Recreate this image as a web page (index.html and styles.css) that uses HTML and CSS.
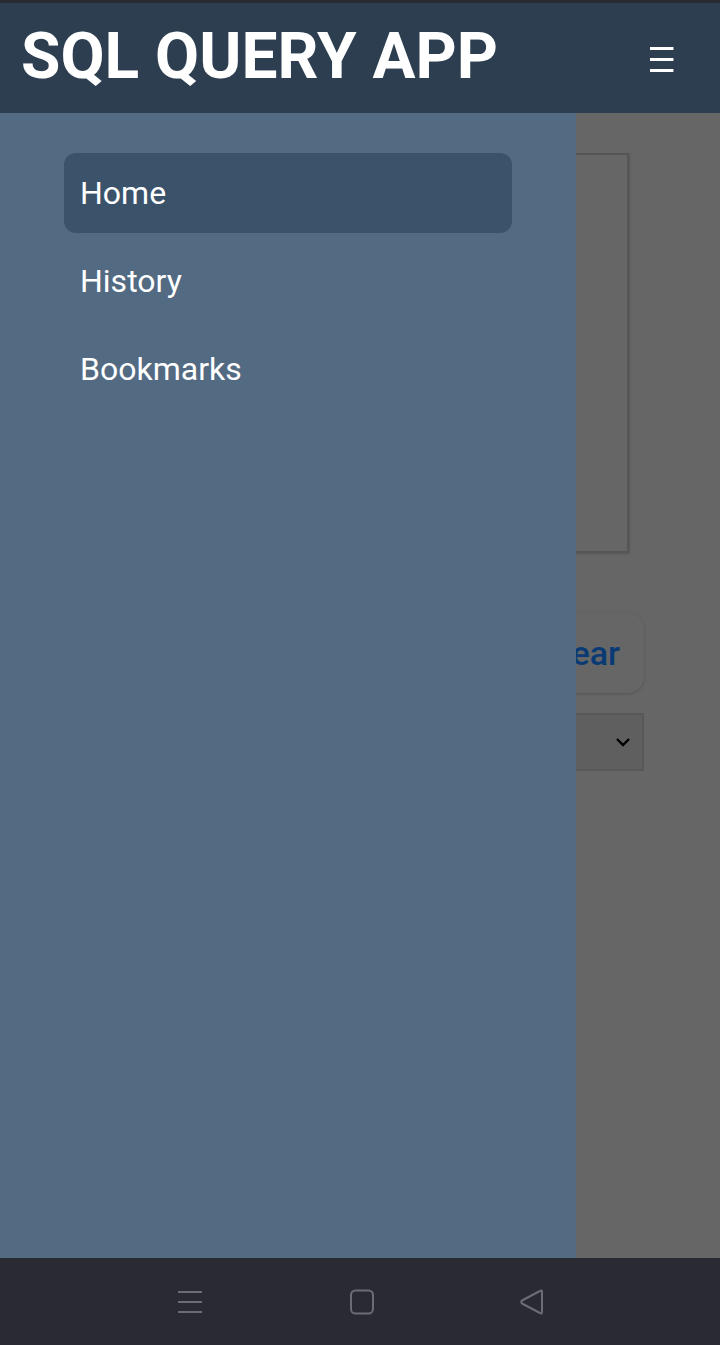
FILE: index.html
```html
<!DOCTYPE html>
<html lang="en">
<head>
<meta charset="utf-8">
<title>SQL Query App</title>
<link rel="stylesheet" href="styles.css">
</head>
<body>
<div class="statusbar"></div>
<header class="topbar">
  <h1 class="title">SQL QUERY APP</h1>
  <button class="menu-btn" aria-label="Menu">
    <span></span><span></span><span></span>
  </button>
</header>
<div class="stage">
  <main class="content">
    <textarea class="query" aria-label="Query"></textarea>
    <div class="actions">
      <button class="btn">Run</button>
      <button class="btn">Clear</button>
    </div>
    <div class="select">
      <span class="select-value"></span>
      <svg class="chevron" width="16" height="10" viewBox="0 0 16 10"><path d="M2 2 L8 8 L14 2" fill="none" stroke="#000" stroke-width="2.4"/></svg>
    </div>
  </main>
  <nav class="drawer">
    <a class="nav-item active">Home</a>
    <a class="nav-item">History</a>
    <a class="nav-item">Bookmarks</a>
  </nav>
</div>
<footer class="navbar">
  <svg class="nav-icon" width="26" height="26" viewBox="0 0 26 26"><path d="M1 3 H25 M1 13 H25 M1 23 H25" stroke="#6c6c74" stroke-width="2" fill="none"/></svg>
  <svg class="nav-icon" width="26" height="26" viewBox="0 0 26 26"><rect x="2" y="1.5" width="22" height="23" rx="4.5" stroke="#6c6c74" stroke-width="2" fill="none"/></svg>
  <svg class="nav-icon nav-back" width="26" height="28" viewBox="0 0 26 28"><path d="M22 3 Q24 1.5 24 4 V24 Q24 26.5 22 25 L4 15.5 Q2.5 14 4 12.5 Z" stroke="#6c6c74" stroke-width="2" fill="none" stroke-linejoin="round"/></svg>
</footer>
</body>
</html>
```
FILE: styles.css
```css
* { box-sizing: border-box; }
html, body {
  margin: 0;
  padding: 0;
  width: 720px;
  height: 1345px;
  overflow: hidden;
  font-family: Roboto, "Liberation Sans", sans-serif;
}
body {
  display: flex;
  flex-direction: column;
  background: #666666;
}
.statusbar {
  height: 3px;
  background: #2a2a31;
  flex: none;
}
.topbar {
  height: 110px;
  flex: none;
  background: #2c3e50;
  display: flex;
  align-items: center;
  justify-content: space-between;
  padding: 0 46px 0 21px;
}
.title {
  margin: 0;
  color: #ffffff;
  font-size: 64px;
  font-weight: 700;
  letter-spacing: 0;
  line-height: 1;
  padding-bottom: 2px;
}
.menu-btn {
  background: none;
  border: 0;
  padding: 0;
  width: 24px;
  height: 25px;
  display: flex;
  flex-direction: column;
  justify-content: space-between;
  margin-top: 3px;
}
.menu-btn span {
  display: block;
  height: 3px;
  width: 23px;
  background: #ffffff;
  box-shadow: 1px 0 0 #8a94a0;
}
.stage {
  position: relative;
  flex: 1;
  background: #666666;
}
.content {
  display: flex;
  flex-direction: column;
  align-items: flex-end;
  padding: 40px 76px 0 24px;
}
.query {
  width: 100%;
  margin-right: 15px;
  height: 400px;
  background: #666666;
  border: 2px solid #555555;
  box-shadow: 1px 1px 2px rgba(0,0,0,0.15);
  resize: none;
}
.actions {
  margin-top: 60px;
  display: flex;
  gap: 16px;
}
.btn {
  height: 80px;
  padding: 0 24px;
  border: 0;
  border-radius: 16px;
  background: #666666;
  box-shadow: 0 1px 3px rgba(0,0,0,0.18);
  color: #093a75;
  font-family: Roboto, "Liberation Sans", sans-serif;
  font-size: 34px;
  font-weight: 500;
}
.select {
  margin-top: 20px;
  width: 300px;
  height: 58px;
  background: #5f5f5f;
  border: 2px solid #585858;
  display: flex;
  align-items: center;
  justify-content: flex-end;
  padding-right: 11px;
}
.drawer {
  position: absolute;
  left: 0;
  top: 0;
  bottom: 0;
  width: 576px;
  background: #526a82;
  padding: 40px 64px 0;
  display: flex;
  flex-direction: column;
  gap: 8px;
}
.nav-item {
  height: 80px;
  display: flex;
  align-items: center;
  padding-left: 16px;
  border-radius: 12px;
  color: #ffffff;
  font-size: 32px;
  font-weight: 400;
}
.nav-item.active {
  background: #3b526b;
}
.navbar {
  height: 87px;
  flex: none;
  background: #2a2a33;
  display: flex;
  align-items: center;
  justify-content: center;
  gap: 146px;
}
.nav-icon {
  display: block;
}
.nav-back {
  margin-left: -3px;
}
```
